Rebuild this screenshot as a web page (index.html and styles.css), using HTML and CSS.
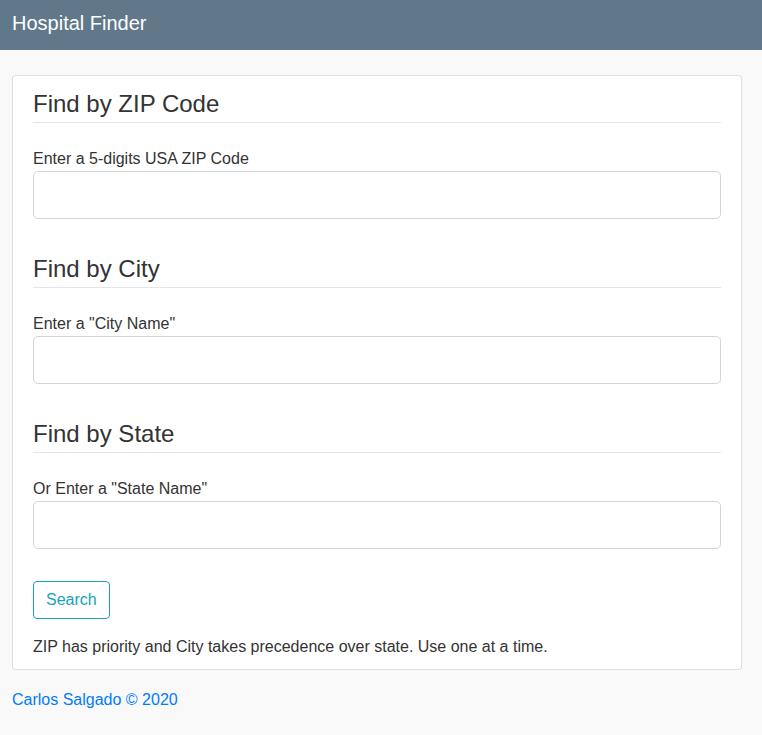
FILE: index.html
```html
<!DOCTYPE html>
<html lang="en">
<head>
<meta charset="utf-8">
<title>Hospital Finder</title>
<link rel="stylesheet" href="styles.css">
</head>
<body>
<nav class="navbar"><span class="brand">Hospital Finder</span></nav>
<main class="main">
  <div class="card">
    <form class="card-body">
      <section class="group">
        <h4 class="group-title">Find by ZIP Code</h4>
        <hr class="rule">
        <label class="label" for="zip">Enter a 5-digits USA ZIP Code</label>
        <input class="input" id="zip" type="text">
      </section>
      <section class="group">
        <h4 class="group-title">Find by City</h4>
        <hr class="rule">
        <label class="label" for="city">Enter a "City Name"</label>
        <input class="input" id="city" type="text">
      </section>
      <section class="group">
        <h4 class="group-title">Find by State</h4>
        <hr class="rule">
        <label class="label" for="state">Or Enter a "State Name"</label>
        <input class="input" id="state" type="text">
      </section>
      <button class="btn" type="button">Search</button>
      <p class="note">ZIP has priority and City takes precedence over state. Use one at a time.</p>
    </form>
  </div>
  <footer class="footer"><a class="credit" href="#">Carlos Salgado &copy; 2020</a></footer>
</main>
</body>
</html>
```
FILE: styles.css
```css
* { box-sizing: border-box; }
html, body { margin: 0; padding: 0; }
body {
  background: #f9f9f9;
  color: #333;
  font-family: "Liberation Sans", Arial, sans-serif;
  font-size: 16px;
  line-height: 24px;
}
.navbar {
  height: 50px;
  background: #607889;
  display: flex;
  align-items: center;
  padding: 0 12px;
}
.brand {
  color: #fff;
  font-size: 20px;
  line-height: 30px;
  padding-bottom: 4px;
}
.main {
  padding: 25px 20px 0 12px;
}
.card {
  background: #fff;
  border: 1px solid rgba(0,0,0,.125);
  border-radius: 4px;
}
.card-body {
  display: flex;
  flex-direction: column;
  align-items: flex-start;
  padding: 13px 20px 10px 20px;
  margin: 0;
}
.group {
  width: 100%;
  display: flex;
  flex-direction: column;
}
.group + .group { margin-top: 35px; }
.group-title {
  margin: 0;
  font-size: 24px;
  line-height: 29px;
  font-weight: 500;
  color: #333;
}
.rule {
  margin: 4px 0 0;
  border: 0;
  border-top: 1px solid rgba(0,0,0,.1);
  height: 0;
}
.label {
  margin-top: 24px;
  display: block;
}
.input {
  margin-top: 0;
  width: 100%;
  height: 48px;
  border: 1px solid #ced4da;
  border-radius: 4.8px;
  background: #fff;
  font: inherit;
  font-size: 20px;
  padding: 8px 16px;
}
.btn {
  margin-top: 32px;
  height: 38px;
  padding: 6px 12px;
  border: 1px solid #17a2b8;
  border-radius: 4px;
  background: transparent;
  color: #17a2b8;
  font: inherit;
  line-height: 24px;
}
.note {
  margin: 16px 0 0;
}
.footer {
  margin-top: 18px;
}
.credit {
  color: #007bff;
  text-decoration: none;
}
```
